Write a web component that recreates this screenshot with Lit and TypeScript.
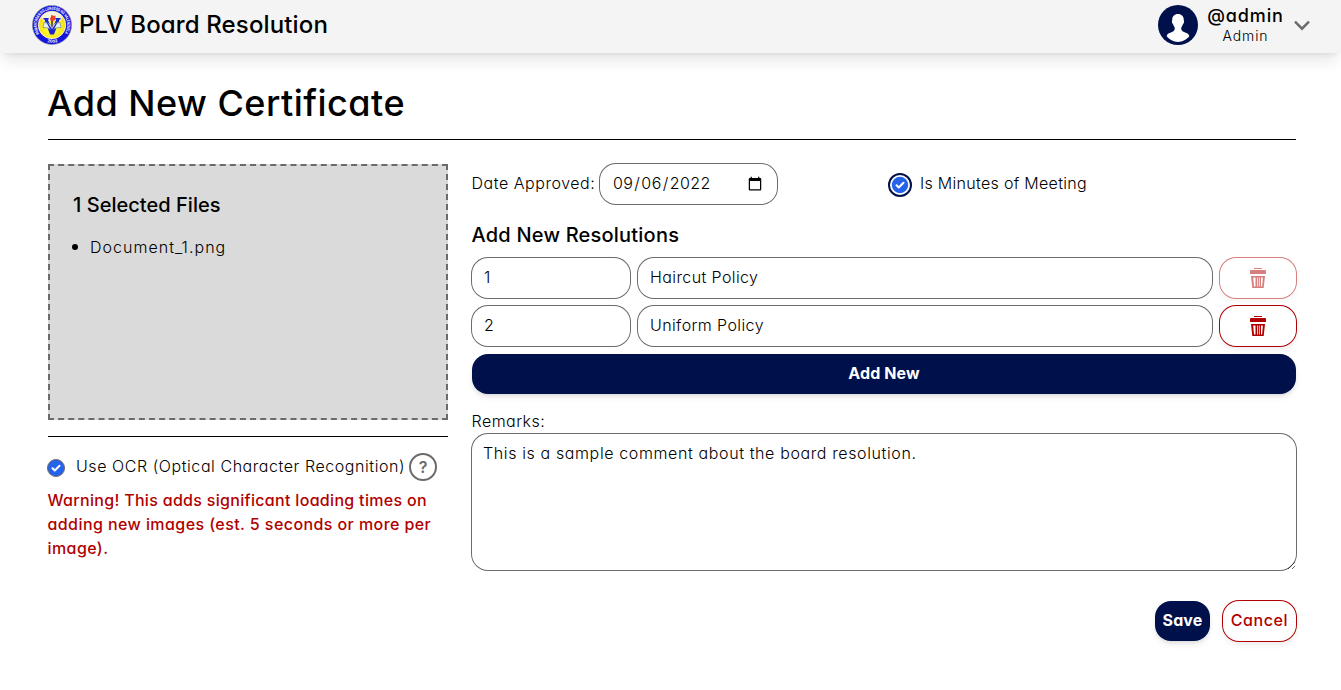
import { LitElement, html, css } from "lit";
import { customElement, state } from "lit/decorators.js";

interface Resolution {
  number: string;
  title: string;
  locked: boolean;
}

@customElement("app-root")
class AppRoot extends LitElement {
  @state() private rows: Resolution[] = [
    { number: "1", title: "Haircut Policy", locked: true },
    { number: "2", title: "Uniform Policy", locked: false },
  ];

  static styles = css`
    :host {
      display: block;
      height: 690px;
      overflow: hidden;
      background: #fff;
      color: #000;
      font-family: Inter, "Open Sans", sans-serif;
      font-feature-settings: "cv11";
      font-size: 16px;
      font-weight: 300;
      line-height: 24px;
    }
    * { box-sizing: border-box; }
    h1, h2, h3, p, ul { margin: 0; padding: 0; }
    input, textarea, button {
      font: inherit;
      font-feature-settings: "cv11";
      color: inherit;
      margin: 0;
    }
    .bar {
      height: 53px;
      padding: 0 31px 3px 32px;
      display: flex;
      align-items: center;
      background: #f4f4f4;
      box-shadow: 0 10px 15px -3px rgba(0, 0, 0, 0.1), 0 4px 6px -4px rgba(0, 0, 0, 0.1);
    }
    .logo { width: 40px; height: 40px; display: block; }
    .brand {
      margin-left: 7px;
      font-size: 24px;
      font-weight: 500;
      letter-spacing: 0.14px;
      flex: 1;
    }
    .avatar { width: 40px; height: 40px; display: block; }
    .who {
      margin: 0 10px 0 9px;
      padding-top: 2px;
      width: 77px;
      text-align: center;
      white-space: nowrap;
    }
    .handle { font-size: 18px; font-weight: 500; line-height: 20px; letter-spacing: 0.9px; }
    .role { font-size: 14px; line-height: 20px; letter-spacing: 0.87px; }
    .chev { width: 16px; height: 16px; display: block; }
    .page { padding: 26px 45px 0 48px; }
    .title {
      height: 61px;
      border-bottom: 1px solid #000;
      font-size: 36px;
      font-weight: 500;
      line-height: 49px;
      letter-spacing: 0.48px;
      text-indent: -1px;
    }
    .cols { display: grid; grid-template-columns: 400px 824px; column-gap: 24px; padding-top: 24px; }
    .drop {
      height: 256px;
      padding: 25px 22px;
      border: 2px dashed #6b6b6b;
      background: #dadada;
    }
    .sub { font-size: 20px; font-weight: 500; line-height: 28px; letter-spacing: 0.03px; }
    .drop .sub { text-indent: 1px; }
    .files { list-style: none; padding-top: 16px; }
    .file { display: flex; align-items: center; letter-spacing: 1.04px; line-height: 24px; }
    .file::before {
      content: "";
      width: 6px;
      height: 6px;
      border-radius: 50%;
      background: #000;
      margin-right: 12px;
    }
    .ocr {
      margin-top: 16px;
      padding-top: 14px;
      border-top: 1px solid #000;
      display: flex;
      align-items: center;
      height: 47px;
      letter-spacing: 0.56px;
      white-space: nowrap;
    }
    .ocr span { margin-top: -3px; }
    .tick { width: 18px; height: 18px; display: block; margin: 2px 11px 0 -1px; flex: none; }
    .help { width: 28px; height: 28px; display: block; margin-left: 4px; flex: none; }
    .warn {
      margin-top: 5px;
      color: #b00000;
      font-weight: 500;
      letter-spacing: 0.31px;
      text-indent: -0.5px;
      white-space: nowrap;
    }
    .warn span { display: block; }
    .warn .wide { letter-spacing: 0.42px; }
    .top { display: flex; align-items: center; height: 40px; }
    .lbl { letter-spacing: 0.54px; width: 128px; line-height: 38px; margin-top: -2px; text-indent: -0.5px; white-space: nowrap; }
    .fld {
      height: 40px;
      padding: 7px 12px 9px;
      border: 0;
      border-radius: 16px;
      outline: none;
      background: #fff;
      box-shadow: 0 0 0 1px #6b6b6b;
      letter-spacing: 0.4px;
    }
    .date { width: 177px; letter-spacing: 0.42px; }
    .date::-webkit-calendar-picker-indicator { position: relative; top: 1px; }
    .mins { display: flex; align-items: center; margin-left: 112px; letter-spacing: 0.3px; }
    .mins span { margin-top: -2px; }
    .ring { width: 24px; height: 24px; display: block; margin: 1px 8px 0 -1px; }
    .sub.res { margin-top: 17px; letter-spacing: 0.21px; text-indent: -0.5px; }
    .rows { display: grid; gap: 8px; margin-top: 9px; }
    .row { display: grid; grid-template-columns: 158px 574px 76px; gap: 8px; }
    .del {
      height: 40px;
      padding: 0;
      border: 0;
      border-radius: 16px;
      background: #fff;
      color: #b00000;
      box-shadow: 0 0 0 1px #b00000, 0 4px 6px rgba(0, 0, 0, 0.07);
      display: grid;
      place-items: center;
    }
    .del[disabled] { opacity: 0.5; }
    .can { width: 16px; height: 20px; display: block; }
    .solid {
      height: 40px;
      padding: 0 0 2px;
      border: 0;
      border-radius: 16px;
      background: #00104a;
      color: #fff;
      font-weight: 700;
      letter-spacing: 0.09px;
      box-shadow: 0 4px 6px -1px rgba(0, 0, 0, 0.1), 0 2px 4px -2px rgba(0, 0, 0, 0.1);
    }
    .rem { margin-top: 15px; margin-bottom: 1px; letter-spacing: 0.46px; text-indent: -0.5px; }
    .area { display: block; width: 824px; height: 136px; padding-left: 11px; letter-spacing: 0.62px; resize: both; }
    .acts { margin-top: 31px; display: flex; justify-content: flex-end; gap: 13px; }
    .save { width: 55px; }
    .cancel { width: 73px; padding: 0 0 2px; font-weight: 500; letter-spacing: 0.6px; display: block; white-space: nowrap; }
  `;

  private logo() {
    return html`<svg class="logo" viewBox="0 0 40 40">
      <defs>
        <path id="arc" d="M7.400 28.500A15.200 15.200 0 1 1 32.600 28.500" />
        <path id="foot" d="M11 35.200A17.700 17.700 0 0 0 29 35.200" />
        <radialGradient id="sun" cy=".6">
          <stop offset=".2" stop-color="#ffff3a" />
          <stop offset="1" stop-color="#f5de13" />
        </radialGradient>
      </defs>
      <circle cx="20" cy="20" r="19.600" fill="#1414dc" stroke="#8d8d9c" stroke-width=".6" />
      <circle cx="20" cy="20" r="13.700" fill="url(#sun)" stroke="#fff" stroke-width=".8" />
      <path d="M9.500 12a13 13 0 0 1 21 0L29 16H11z" fill="#f4f3dc" />
      <path d="M11.500 13h5.200v1.500h-1L20 24l4.300-9.500h-1V13h5.200v1.500h-1L22 29.500h-4L12.500 14.500h-1z" fill="#1b22d2" />
      <path d="M12 17.500q5-.5 8 3.500 3-4 8-3.500l1 5q-5.500-.5-9 2.500-3.500-3-9-2.500z" fill="#e6eff0" stroke="#55779b" stroke-width=".6" />
      <path d="M14.500 17.800l3.500 6 2 2 2-2 3.500-6-1.800.6L20 24l-3.700-5.600z" fill="#1b22d2" />
      <path d="M19 15.500h2l-.4 7h-1.200z" fill="#594234" />
      <path d="M20 16.500c-4-2-.5-4-.8-6.500 2.500.3 2 1.500 4 .5.800 3-.2 5.500-3.200 6z" fill="#e9432a" />
      <text font-size="4.200" font-weight="700" fill="#fff"><textPath href="#arc" textLength="65" lengthAdjust="spacingAndGlyphs">PAMANTASAN NG LUNGSOD NG VALENZUELA</textPath></text>
      <text font-size="4" font-weight="700" fill="#fff"><textPath href="#foot" startOffset="25%">2002</textPath></text>
    </svg>`;
  }

  private trash() {
    return html`<svg class="can" viewBox="0 0 16 20" fill="currentColor">
      <path d="M4 0h8v1H4zM0 3q0-1 1-1h14q1 0 1 1v3H0z" />
      <path fill-rule="evenodd" d="M1 8h14l-1.300 12H2.300zM3.200 9.500l.8 9h1.500V9.500zM7 9.500v9h.8v-9zM8.900 9.500v9h.8v-9zM11 9.500v9h1.100l.8-9z" />
    </svg>`;
  }

  render() {
    return html`
      <header class="bar">
        ${this.logo()}
        <div class="brand">PLV Board Resolution</div>
        <svg class="avatar" viewBox="0 0 40 40">
          <circle cx="20" cy="20" r="20" fill="#00104a" />
          <path fill="#fff" d="M20 9c-3.700 0-5.800 2.500-5.800 5.800 0 1-.5 1.200-.2 2.600.2 1 .8 1 1 1.600.5 2 1.500 2.800 1.700 3.800.3 2-.3 3-2.200 3.900-3 1.300-5.800 2-5.800 4.600C11.500 34.500 15.500 37 20 37s8.500-2.500 11.300-5.700c0-2.600-2.800-3.300-5.800-4.600-1.900-.9-2.500-1.900-2.200-3.900.2-1 1.200-1.800 1.700-3.800.2-.6.8-.6 1-1.600.3-1.400-.2-1.600-.2-2.600C25.800 11.500 23.700 9 20 9z" />
        </svg>
        <div class="who">
          <div class="handle">@admin</div>
          <div class="role">Admin</div>
        </div>
        <svg class="chev" viewBox="0 0 16 16" fill="none" stroke="#6b6b6b" stroke-width="2.400">
          <path d="M1 4.700l7 7 7-7" />
        </svg>
      </header>
      <main class="page">
        <h1 class="title">Add New Certificate</h1>
        <div class="cols">
          <section>
            <div class="drop">
              <h2 class="sub">1 Selected Files</h2>
              <ul class="files"><li class="file">Document_1.png</li></ul>
            </div>
            <div class="ocr">
              <svg class="tick" viewBox="0 0 18 18">
                <circle cx="9" cy="9" r="8.500" fill="#2563eb" stroke="#6b6b6b" />
                <path d="M5.500 9.200l2.300 2.300 4.700-4.700" fill="none" stroke="#fff" stroke-width="2" stroke-linecap="round" stroke-linejoin="round" />
              </svg>
              <span>Use OCR (Optical Character Recognition)</span>
              <svg class="help" viewBox="0 0 28 28">
                <circle cx="14" cy="14" r="13" fill="none" stroke="#6b6b6b" stroke-width="2" />
                <text x="14" y="19.500" text-anchor="middle" font-size="16" font-weight="600" letter-spacing="0" fill="#6b6b6b">?</text>
              </svg>
            </div>
            <p class="warn">
              <span>Warning! This adds significant loading times on</span>
              <span class="wide">adding new images (est. 5 seconds or more per</span>
              <span class="wide">image).</span>
            </p>
          </section>
          <section>
            <div class="top">
              <label class="lbl">Date Approved:</label>
              <input class="fld date" type="date" .value=${"2022-09-06"} />
              <div class="mins">
                <svg class="ring" viewBox="0 0 24 24">
                  <circle cx="12" cy="12" r="11" fill="#fff" stroke="#00104a" stroke-width="2" />
                  <circle cx="12" cy="12" r="8.200" fill="#2563eb" />
                  <path d="M8.500 12.200l2.300 2.300 4.700-4.700" fill="none" stroke="#fff" stroke-width="2" stroke-linecap="round" stroke-linejoin="round" />
                </svg>
                <span>Is Minutes of Meeting</span>
              </div>
            </div>
            <h2 class="sub res">Add New Resolutions</h2>
            <div class="rows">
              ${this.rows.map(
                (r) => html`<div class="row">
                  <input class="fld" .value=${r.number} />
                  <input class="fld" .value=${r.title} />
                  <button class="del" ?disabled=${r.locked}>${this.trash()}</button>
                </div>`
              )}
              <button class="solid">Add New</button>
            </div>
            <div class="rem">Remarks:</div>
            <textarea class="fld area" .value=${"This is a sample comment about the board resolution."}></textarea>
            <div class="acts">
              <button class="solid save">Save</button>
              <button class="del cancel">Cancel</button>
            </div>
          </section>
        </div>
      </main>
    `;
  }
}
